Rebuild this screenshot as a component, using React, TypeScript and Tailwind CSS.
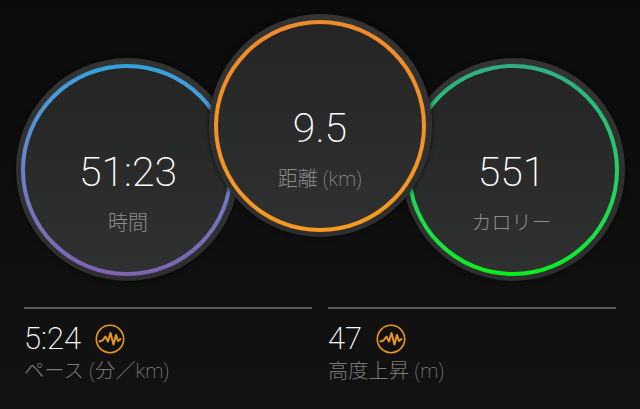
import React from "react";

function Dial({ value, label, unit, ring, className, face }: { value: string; label: string; unit?: string; ring: string; className: string; face: string }) {
  return (
    <div className={`w-[223px] h-[223px] shrink-0 rounded-full bg-linear-to-b from-[#333333] to-[#2e2e2e] p-[5.5px] shadow-[0_0_5px_rgba(0,0,0,0.7)] ${className}`}>
      <div className={`w-full h-full rounded-full p-[4px] ${ring}`}>
        <div className={`w-full h-full rounded-full bg-linear-to-b from-[#252525] to-[#2f3030] flex flex-col items-center pt-[80px] ${face}`}>
          <div className="text-[41px] leading-[48px] font-extralight text-white">{value}</div>
          <div className="mt-[13px] text-[20px] leading-[28px] font-extralight text-[#8c8c8c]">
            {label}
            {unit ? <span> {unit}</span> : null}
          </div>
        </div>
      </div>
    </div>
  );
}

function Badge() {
  return (
    <svg width="30" height="30" viewBox="0 0 30 30" fill="none" stroke="#e9981f" className="shrink-0">
      <circle cx="15" cy="15" r="13.7" strokeWidth="1.6" />
      <path d="M4.5 17.5 L7.5 16.5 L10.5 12.5 L13 17.5 L15.5 9 L18.5 20.5 L21 11 L23 17 L25.5 15" strokeWidth="2" strokeLinejoin="round" strokeLinecap="round" />
    </svg>
  );
}

function Stat({ value, label }: { value: string; label: string }) {
  return (
    <div className="flex-1 border-t-2 border-[#5a5a5a] pt-[14px]">
      <div className="flex items-center h-[32px]">
        <span className="text-[31px] leading-[32px] font-extralight text-white">{value}</span>
        <span className="ml-[14px] flex"><Badge /></span>
      </div>
      <div className="text-[20.3px] leading-[26px] font-extralight text-[#7a7a7a] mt-[3px]">{label}</div>
    </div>
  );
}

export default function App() {
  return (
    <div className="w-[640px] h-[409px] overflow-hidden bg-linear-to-b from-[#0b0b0b] to-[#121212] font-['Roboto','Noto_Sans_CJK_JP',sans-serif] flex flex-col">
      <div className="flex justify-center items-start pt-[14px] h-[307px]">
        <Dial value="51:23" label="時間" face="pl-[2px]" ring="bg-linear-to-b from-[#2fa3dc] to-[#7e62b2]" className="mt-[44px] relative z-0" />
        <Dial value="9.5" label="距離" face="" unit="(km)" ring="bg-linear-to-b from-[#f08a2a] to-[#f59a20]" className="mx-[-30px] relative z-10" />
        <Dial value="551" label="カロリー" face="pr-[3px]" ring="bg-linear-to-b from-[#2fae82] to-[#0aee16]" className="mt-[44px] relative z-0" />
      </div>
      <div className="flex gap-4 px-6">
        <Stat value="5:24" label="ペース (分／km)" />
        <Stat value="47" label="高度上昇 (m)" />
      </div>
    </div>
  );
}
